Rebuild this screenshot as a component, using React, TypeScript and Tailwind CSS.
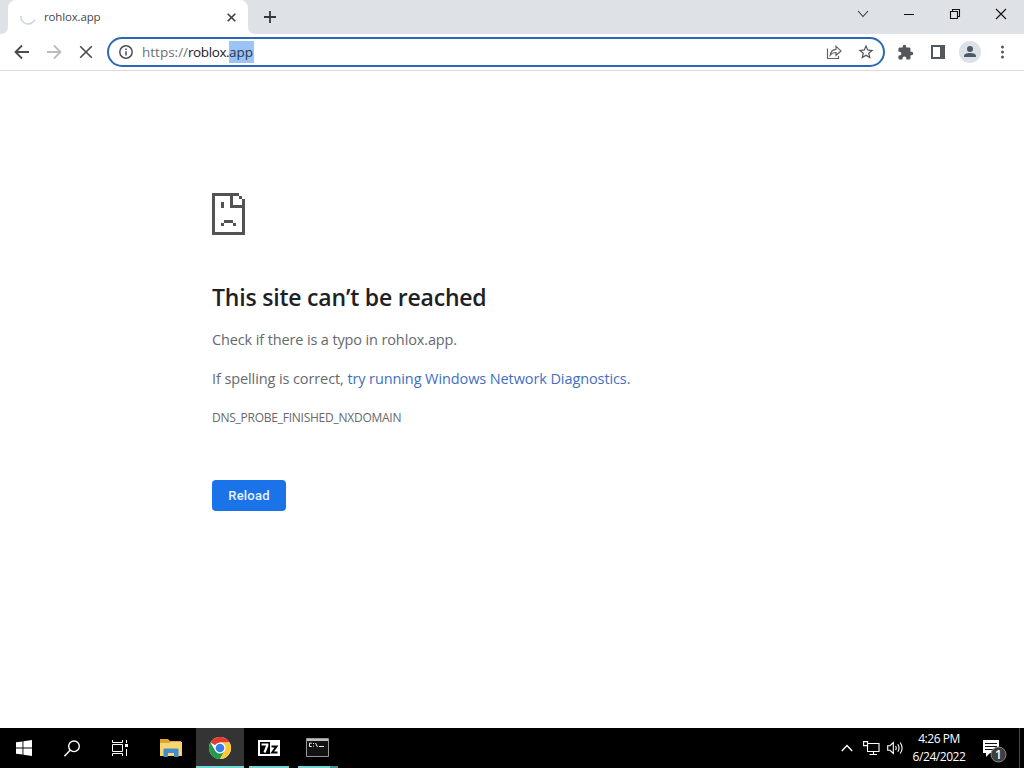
import type { ReactNode } from "react";

// 11x14 cell bitmap, drawn at 3px per cell
const SAD_PAGE = [
  "#########..",
  "#.....#..#.",
  "#.....#...#",
  "#..#..#...#",
  "#..#..#####",
  "#.........#",
  "#.........#",
  "#.........#",
  "#.........#",
  "#...###...#",
  "#..#...#..#",
  "#.........#",
  "#.........#",
  "###########",
];

function SadPageIcon() {
  return (
    <svg width="33" height="42" viewBox="0 0 11 14" shapeRendering="crispEdges" fill="#535353">
      {SAD_PAGE.flatMap((row, y) =>
        row.split("").map((c, x) => (c === "#" ? <rect key={`${x}-${y}`} x={x} y={y} width="1" height="1" /> : null))
      )}
    </svg>
  );
}

function ChromeIcon() {
  return (
    <svg className="mt-0.5" width="24" height="24" viewBox="0 0 24 24">
      <circle cx="12" cy="12" r="11" fill="#fff" />
      <path d="M12 12 2.47 6.5A11 11 0 0 1 21.53 6.5H12z" fill="#e33b2e" />
      <path d="M2.47 6.5A11 11 0 0 0 12 23L16.76 14.75 12 12 7.24 14.75z" fill="#229a4c" />
      <path d="M21.53 6.5A11 11 0 0 1 12 23L16.76 14.75 12 12V6.5z" fill="#fcc934" />
      <circle cx="12" cy="12" r="5.6" fill="#fff" />
      <circle cx="12" cy="12" r="4.3" fill="#3b7de9" />
    </svg>
  );
}

function TabStrip() {
  return (
    <header className="flex h-[34px] shrink-0 bg-[#dee1e6]">
      <svg className="shrink-0" width="8" height="34">
        <path d="M0 34Q8 34 8 26V34z" fill="#fff" />
      </svg>
      <div className="flex h-[34px] w-[240px] items-center rounded-t-lg bg-white pl-3">
        <svg width="16" height="16" viewBox="0 0 16 16" fill="none" stroke="#c8d8e0" strokeWidth="1.6">
          <path d="M.9 7A7.2 7.2 0 0 0 14.7 10.6" />
        </svg>
        <span className="ml-2 text-[11.5px] leading-4 tracking-[-0.15px] text-[#45484c]">rohlox.app</span>
        <svg className="ml-auto mr-3" width="9" height="9" viewBox="0 0 9 9" stroke="#3c4043" strokeWidth="1.6">
          <path d="M.7.7 8.3 8.3M8.3.7.7 8.3" />
        </svg>
      </div>
      <svg className="shrink-0" width="8" height="34">
        <path d="M8 34Q0 34 0 26V34z" fill="#fff" />
      </svg>
      <svg className="ml-2 mt-[11px]" width="12" height="12" viewBox="0 0 12 12" stroke="#35383b" strokeWidth="1.8">
        <path d="M6 0V12M0 6H12" />
      </svg>
      <div className="ml-auto flex h-[28px] items-center">
        <svg width="46" height="12" viewBox="0 0 46 12" fill="none" stroke="#35383b" strokeWidth="1.1">
          <path d="M18 3 23 8.5 28 3" />
        </svg>
        <svg width="46" height="12" viewBox="0 0 46 12">
          <path d="M18 6H28V7H18z" fill="#111" />
        </svg>
        <svg width="46" height="12" viewBox="0 0 46 12" fill="none" stroke="#111" strokeWidth="1.1">
          <path d="M18.5 3.5H25.5V10.5H18.5zM20.5 3.5V1.5H27.5V8.5H25.5" />
        </svg>
        <svg width="46" height="12" viewBox="0 0 46 12" stroke="#111" strokeWidth="1.1">
          <path d="M18 1 28 11M28 1 18 11" />
        </svg>
      </div>
    </header>
  );
}

function Omnibox() {
  return (
    <div className="flex h-[30px] w-[778px] items-center rounded-full border-2 border-[#2b68b8] bg-white pl-2.5 pr-2">
      <svg width="14" height="14" viewBox="0 0 14 14" fill="none" stroke="#4d5156" strokeWidth="1.5">
        <circle cx="7" cy="7" r="6.2" />
        <path d="M7 6.2V10.5M7 3.4V5" />
      </svg>
      <div className="ml-[9px] flex text-[13.5px] leading-[22px]">
        <span className="w-[46px] text-[#6b6f74]">https://</span>
        <span className="w-[41px] tracking-[-0.4px] text-[#202124]">roblox.</span>
        <span className="h-[22px] w-[25px] bg-[#9bc3f3] text-[#26374d]">app</span>
      </div>
      <svg className="ml-auto" width="18" height="18" viewBox="0 0 18 18" fill="none" stroke="#5f6368" strokeWidth="1.2">
        <path d="M2.5 5.5V15.5H13.5V13" />
        <path d="M5.2 12.2C5.7 8.2 8 6.5 11 6.3V3.3L16 7.9 11 12.3V9.5C8.3 9.5 6.6 10.4 5.2 12.2z" />
      </svg>
      <svg className="ml-[14px]" width="18" height="18" viewBox="0 0 24 24" fill="#4d5156">
        <path d="m22 9.24-7.19-.62L12 2 9.19 8.63 2 9.24l5.46 4.73L5.82 21 12 17.27 18.18 21l-1.63-7.03zM12 15.4l-3.76 2.27 1-4.28-3.32-2.88 4.38-.38L12 6.1l1.71 4.04 4.38.38-3.32 2.88 1 4.28z" />
      </svg>
    </div>
  );
}

function Toolbar() {
  return (
    <div className="flex h-[37px] shrink-0 items-center border-b border-[#d9dbde] bg-white pl-[14px]">
      <svg width="16" height="16" viewBox="0 0 16 16" fill="none" stroke="#484b4f" strokeWidth="1.8">
        <path d="M15 8H2M8 1.5 1.5 8 8 14.5" />
      </svg>
      <svg className="ml-4" width="16" height="16" viewBox="0 0 16 16" fill="none" stroke="#b9bbbe" strokeWidth="1.8">
        <path d="M1 8H14M8 1.5 14.5 8 8 14.5" />
      </svg>
      <svg className="ml-4 mr-[13px]" width="16" height="16" viewBox="0 0 16 16" stroke="#484b4f" strokeWidth="1.6">
        <path d="M2.2 2.2 13.8 13.8M13.8 2.2 2.2 13.8" />
      </svg>
      <Omnibox />
      <svg className="ml-3" width="17" height="17" viewBox="0 0 24 24" fill="#54585c">
        <path d="M20.5 11H19V7c0-1.1-.9-2-2-2h-4V3.5a2.5 2.5 0 0 0-5 0V5H4c-1.1 0-2 .9-2 2v3.8h1.5c1.5 0 2.7 1.2 2.7 2.7S5 16.2 3.5 16.2H2V20c0 1.1.9 2 2 2h3.8v-1.5c0-1.5 1.2-2.7 2.7-2.7s2.7 1.2 2.7 2.7V22H17c1.1 0 2-.9 2-2v-4h1.5a2.5 2.5 0 0 0 0-5z" />
      </svg>
      <svg className="ml-4" width="16" height="16" viewBox="0 0 16 16">
        <path d="M1 1H15V15H1zM3 3V13H10V3z" fill="#54585c" fillRule="evenodd" />
      </svg>
      <svg className="ml-[13px]" width="22" height="22" viewBox="0 0 22 22">
        <circle cx="11" cy="11" r="11" fill="#dce1e7" />
        <circle cx="11" cy="8" r="3" fill="#4c5863" />
        <path d="M5 16V14.7C5 12.7 9 12 11 12S17 12.7 17 14.7V16z" fill="#4c5863" />
      </svg>
      <svg className="ml-[19px]" width="5" height="14" viewBox="0 0 5 14" fill="#54585c">
        <circle cx="2.5" cy="2" r="1.5" />
        <circle cx="2.5" cy="7" r="1.5" />
        <circle cx="2.5" cy="12" r="1.5" />
      </svg>
    </div>
  );
}

function ErrorPage() {
  return (
    <main className="flex flex-1 flex-col items-start bg-white pl-[212px] pt-[122px] text-[#66696d]">
      <SadPageIcon />
      <h1 className="mt-[48px] whitespace-nowrap text-[23px] font-semibold leading-[29px] tracking-[-0.2px] text-[#202124]">
        This site can’t be reached
      </h1>
      <p className="mt-4 whitespace-nowrap text-[14.5px] leading-[24px] tracking-[-0.13px]">
        Check if there is a typo in rohlox.app.
      </p>
      <p className="mt-[15px] whitespace-nowrap text-[14.5px] leading-[24px] tracking-[-0.1px]">
        If spelling is correct, <a className="text-[#3f6fc4]">try running Windows Network Diagnostics</a>.
      </p>
      <p className="mt-[18px] whitespace-nowrap text-[12px] leading-[18px] tracking-[-0.25px]">DNS_PROBE_FINISHED_NXDOMAIN</p>
      <button className="mt-[53px] h-[31px] w-[74px] rounded-[4px] bg-[#1a73e8] font-[Roboto,sans-serif] text-[13px] font-medium tracking-[0.2px] text-[#eaf3ff]">
        Reload
      </button>
    </main>
  );
}

function TaskButton({ children, className = "" }: { children: ReactNode; className?: string }) {
  return <div className={`flex h-10 items-center justify-center ${className}`}>{children}</div>;
}

function Taskbar() {
  return (
    <footer className="flex h-10 shrink-0 bg-black text-white">
      <TaskButton className="w-12">
        <svg width="16" height="16" viewBox="0 0 16 16" fill="#fff">
          <path d="M0 2.3 6.5 1.4V7.6H0zM7.4 1.25 16 0V7.6H7.4zM0 8.4H6.5V14.6L0 13.7zM7.4 8.4H16V16L7.4 14.75z" />
        </svg>
      </TaskButton>
      <TaskButton className="w-12">
        <svg width="16" height="17" viewBox="0 0 16 17" fill="none" stroke="#fff" strokeWidth="1.4">
          <circle cx="10" cy="6.3" r="5.3" />
          <path d="M6.2 10.2.4 16.2" />
        </svg>
      </TaskButton>
      <TaskButton className="w-12">
        <svg width="16" height="16" viewBox="0 0 16 16" fill="none" stroke="#fff">
          <path d="M.5 0V2.5H10.5V0M.5 16V13.5H10.5V16M.5 4.5H10.5V11.5H.5zM14.5 0V3M14.5 9V16" />
          <path d="M13 4H16V7H13z" fill="#fff" stroke="none" />
        </svg>
      </TaskButton>
      <TaskButton className="w-12 pl-1.5">
        <svg width="22" height="18" viewBox="0 0 22 18">
          <path d="M0 0H8L10 2H21V6H0z" fill="#dda52f" />
          <path d="M0 4H9L11 3H22V17H0z" fill="#f7d672" />
          <path d="M3.5 18V10.5Q3.5 9.5 4.5 9.5H17.5Q18.5 9.5 18.5 10.5V18H14V14H8V18z" fill="#458dca" />
        </svg>
      </TaskButton>
      <TaskButton className="ml-1 w-12 border-b-2 border-[#76d6d3] bg-[#343434]">
        <ChromeIcon />
      </TaskButton>
      <TaskButton className="ml-[5px] w-10 border-b-2 border-[#76d6d3] pt-0.5">
        <svg width="22" height="16" viewBox="0 0 22 16" fill="none" stroke="#000">
          <path d="M0 0H22V16H0z" fill="#fff" stroke="none" />
          <path d="M2 2H12V14H2z" fill="#000" stroke="none" />
          <path d="M3.5 4.5H9.3V5.5L6.5 12.5" stroke="#fff" strokeWidth="2.2" />
          <path d="M13.5 6.5H18.5L14.2 12.5H19.5" strokeWidth="2" />
        </svg>
      </TaskButton>
      <div className="ml-[9px] flex h-10">
        <TaskButton className="w-8 border-b-2 border-[#76d6d3] pl-1.5">
          <svg className="shrink-0" width="23" height="19" viewBox="0 0 23 19">
            <path d="M.5.5H22.5V18.5H.5z" fill="#121212" stroke="#989898" />
            <path d="M1 1H22V3H1z" fill="#bfbfbf" />
            <path d="M5.8 5.2H3.5V8.5H5.8M7.5 5V6M7.5 7.7V8.7M9.5 5 11.5 9M13 8.5H18" fill="none" stroke="#eee" />
          </svg>
        </TaskButton>
        <div className="h-10 w-2 border-b-2 border-[#4b8f8a]" />
      </div>
      <div className="ml-auto flex items-center">
        <svg width="12" height="8" viewBox="0 0 12 8" fill="none" stroke="#fff" strokeWidth="1.4">
          <path d="M.8 7 6 1.5 11.2 7" />
        </svg>
        <svg className="ml-[10px]" width="17" height="14" viewBox="0 0 17 14" fill="none" stroke="#fff" strokeWidth="1.1">
          <path d="M5 2.5H16V10.5H4.5V5M10.5 10.5V13.5M6.5 13.5H14" />
          <path d="M.6.6H4.6V4.6H.6z" />
        </svg>
        <svg className="ml-[7px]" width="17" height="14" viewBox="0 0 17 14" fill="none" stroke="#fff" strokeWidth="1.1">
          <path d="M.7 4.7H3L6.3 1.5V12.5L3 9.3H.7zM8.5 5Q10 7 8.5 9M10.8 3.3Q13.3 7 10.8 10.7M13.2 1.5Q17 7 13.2 12.5" />
        </svg>
        <div className="ml-[6px] w-[58px] whitespace-nowrap text-center text-[12px] leading-[18px] tracking-[-0.45px]">
          <div>4:26 PM</div>
          <div>6/24/2022</div>
        </div>
        <svg className="ml-[14px] mt-[5px]" width="25" height="24" viewBox="0 0 25 24">
          <path d="M1 1H17V14H8L4 18V14H1z" fill="#fff" />
          <path d="M3 4.5H15M3 7.5H15M3 10.5H11" stroke="#111" />
          <circle cx="16.5" cy="15.5" r="7.5" fill="#3f3f3f" stroke="#8a8a8a" />
          <text x="16.5" y="20" textAnchor="middle" fill="#fff" className="text-[12px] font-semibold">1</text>
        </svg>
        <div className="ml-3 mr-1 h-10 w-px bg-[#4a4a4a]" />
      </div>
    </footer>
  );
}

export default function App() {
  return (
    <div className="flex h-screen w-screen flex-col overflow-hidden bg-white font-['Open_Sans','Noto_Sans',sans-serif]">
      <TabStrip />
      <Toolbar />
      <ErrorPage />
      <Taskbar />
    </div>
  );
}
